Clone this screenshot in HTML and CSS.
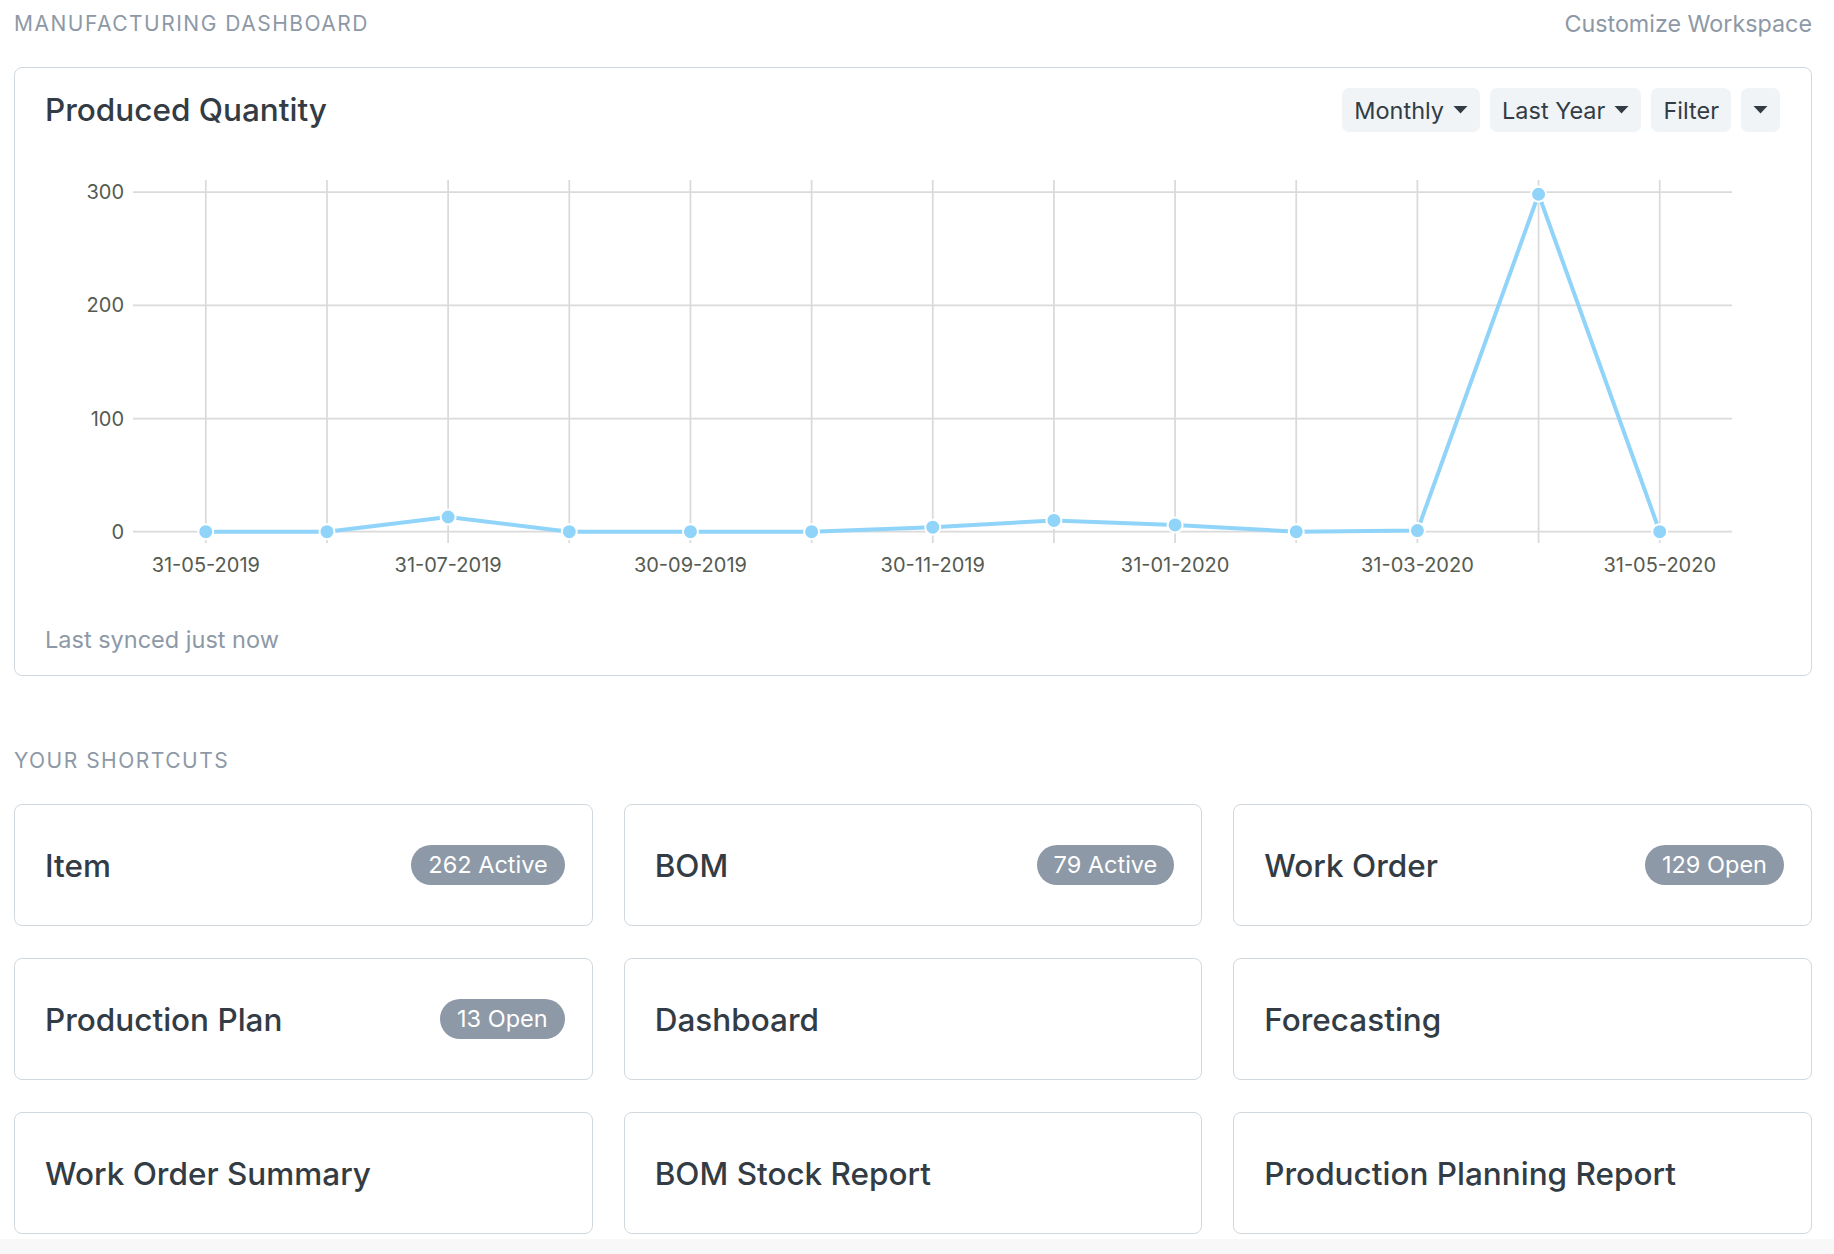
FILE: index.html
```html
<!DOCTYPE html>
<html lang="en">
<head>
<meta charset="utf-8">
<title>Manufacturing Dashboard</title>
<link rel="stylesheet" href="styles.css">
</head>
<body>
<div class="page">
  <header class="page-head">
    <div class="group-title">Manufacturing Dashboard</div>
    <a class="customize">Customize Workspace</a>
  </header>

  <section class="chart-card">
    <div class="chart-head">
      <h2 class="chart-title">Produced Quantity</h2>
      <div class="chart-actions">
        <button class="btn">Monthly<svg class="caret" viewBox="0 0 14 8" width="14" height="8"><path d="M0 0 L14 0 L7 7.5 Z"/></svg></button>
        <button class="btn">Last Year<svg class="caret" viewBox="0 0 14 8" width="14" height="8"><path d="M0 0 L14 0 L7 7.5 Z"/></svg></button>
        <button class="btn">Filter</button>
        <button class="btn btn-icon"><svg class="caret solo" viewBox="0 0 14 8" width="14" height="8"><path d="M0 0 L14 0 L7 7.5 Z"/></svg></button>
      </div>
    </div>

    <svg class="chart" width="1735" height="440" viewBox="0 0 1735 440">
      <g class="grid">
        <line x1="160.80" y1="30" x2="160.80" y2="393"/>
        <line x1="281.96" y1="30" x2="281.96" y2="393"/>
        <line x1="403.12" y1="30" x2="403.12" y2="393"/>
        <line x1="524.28" y1="30" x2="524.28" y2="393"/>
        <line x1="645.44" y1="30" x2="645.44" y2="393"/>
        <line x1="766.60" y1="30" x2="766.60" y2="393"/>
        <line x1="887.76" y1="30" x2="887.76" y2="393"/>
        <line x1="1008.92" y1="30" x2="1008.92" y2="393"/>
        <line x1="1130.08" y1="30" x2="1130.08" y2="393"/>
        <line x1="1251.24" y1="30" x2="1251.24" y2="393"/>
        <line x1="1372.40" y1="30" x2="1372.40" y2="393"/>
        <line x1="1493.56" y1="30" x2="1493.56" y2="393"/>
        <line x1="1614.72" y1="30" x2="1614.72" y2="393"/>
        <line x1="88" y1="42" x2="1687" y2="42"/>
        <line x1="88" y1="155.3" x2="1687" y2="155.3"/>
        <line x1="88" y1="268.7" x2="1687" y2="268.7"/>
        <line x1="88" y1="381.7" x2="1687" y2="381.7"/>
      </g>
      <g class="y-labels">
        <text x="79" y="49">300</text>
        <text x="79" y="162.3">200</text>
        <text x="79" y="275.7">100</text>
        <text x="79" y="388.7">0</text>
      </g>
      <g class="x-labels">
        <text x="160.80" y="422">31-05-2019</text>
        <text x="403.12" y="422">31-07-2019</text>
        <text x="645.44" y="422">30-09-2019</text>
        <text x="887.76" y="422">30-11-2019</text>
        <text x="1130.08" y="422">31-01-2020</text>
        <text x="1372.40" y="422">31-03-2020</text>
        <text x="1614.72" y="422">31-05-2020</text>
      </g>
      <polyline class="series" points="160.80,381.7 281.96,381.7 403.12,366.98 524.28,381.7 645.44,381.7 766.60,381.7 887.76,377.17 1008.92,370.38 1130.08,374.91 1251.24,381.7 1372.40,380.57 1493.56,44.27 1614.72,381.7"/>
      <g class="dots">
        <circle cx="160.80" cy="381.7" r="7.5"/>
        <circle cx="281.96" cy="381.7" r="7.5"/>
        <circle cx="403.12" cy="366.98" r="7.5"/>
        <circle cx="524.28" cy="381.7" r="7.5"/>
        <circle cx="645.44" cy="381.7" r="7.5"/>
        <circle cx="766.60" cy="381.7" r="7.5"/>
        <circle cx="887.76" cy="377.17" r="7.5"/>
        <circle cx="1008.92" cy="370.38" r="7.5"/>
        <circle cx="1130.08" cy="374.91" r="7.5"/>
        <circle cx="1251.24" cy="381.7" r="7.5"/>
        <circle cx="1372.40" cy="380.57" r="7.5"/>
        <circle cx="1493.56" cy="44.27" r="7.5"/>
        <circle cx="1614.72" cy="381.7" r="7.5"/>
      </g>
    </svg>

    <div class="synced">Last synced just now</div>
  </section>

  <div class="group-title section-title">Your Shortcuts</div>

  <div class="shortcuts">
    <a class="shortcut"><span class="sc-label">Item</span><span class="badge">262 Active</span></a>
    <a class="shortcut"><span class="sc-label">BOM</span><span class="badge">79 Active</span></a>
    <a class="shortcut"><span class="sc-label">Work Order</span><span class="badge">129 Open</span></a>
    <a class="shortcut"><span class="sc-label">Production Plan</span><span class="badge">13 Open</span></a>
    <a class="shortcut"><span class="sc-label">Dashboard</span></a>
    <a class="shortcut"><span class="sc-label">Forecasting</span></a>
    <a class="shortcut"><span class="sc-label">Work Order Summary</span></a>
    <a class="shortcut"><span class="sc-label">BOM Stock Report</span></a>
    <a class="shortcut"><span class="sc-label">Production Planning Report</span></a>
  </div>
</div>
</body>
</html>
```

FILE: styles.css
```css
* {
  box-sizing: border-box;
}

html {
  background: #f8f8f8;
}

body {
  margin: 0;
  font-family: Inter, "Noto Sans", "Liberation Sans", sans-serif;
  color: #333c44;
}

.page {
  background: #ffffff;
  padding: 0 22px 5px 14px;
}

.page-head {
  height: 48px;
  display: flex;
  align-items: center;
  justify-content: space-between;
}

.group-title {
  font-size: 21px;
  font-weight: 400;
  letter-spacing: 1.5px;
  text-transform: uppercase;
  color: #8d99a6;
  line-height: 30px;
}

.customize {
  font-size: 23.3px;
  color: #8d99a6;
  line-height: 30px;
}

.chart-card {
  margin-top: 19px;
  border: 1px solid #d1d8dd;
  border-radius: 8px;
  padding: 20px 31px 19px 30px;
}

.chart-head {
  height: 44px;
  display: flex;
  align-items: center;
  justify-content: space-between;
}

.chart-title {
  margin: 0;
  font-size: 31.5px;
  font-weight: 500;
  color: #333c44;
  line-height: 44px;
}

.chart-actions {
  display: flex;
  gap: 10px;
  height: 44px;
}

.btn {
  display: flex;
  align-items: center;
  height: 44px;
  padding: 0 12px;
  border: 0;
  border-radius: 7px;
  background: #f0f4f7;
  font-family: inherit;
  font-size: 23.5px;
  color: #333c44;
}

.caret {
  margin-left: 9px;
  width: 15px;
  height: 8px;
  fill: #333c44;
}

.caret.solo {
  margin-left: 0;
}

.chart {
  display: block;
  margin-top: 18px;
}

.grid line {
  stroke: #dadada;
  stroke-width: 1.75;
}

.y-labels text,
.x-labels text {
  font-family: Inter, "Noto Sans", sans-serif;
  font-size: 20px;
  fill: #555b51;
}

.y-labels text {
  text-anchor: end;
}

.x-labels text {
  text-anchor: middle;
}

.series {
  fill: none;
  stroke: #90d4f9;
  stroke-width: 4;
  stroke-linejoin: round;
}

.dots circle {
  fill: #90d4f9;
  stroke: #ffffff;
  stroke-width: 2;
}

.synced {
  margin-top: 34px;
  font-size: 23.5px;
  line-height: 32px;
  color: #8d99a6;
}

.section-title {
  margin-top: 70px;
  margin-bottom: 28px;
}

.shortcuts {
  display: grid;
  grid-template-columns: repeat(3, 1fr);
  column-gap: 31px;
  row-gap: 32px;
}

.shortcut {
  height: 122px;
  display: flex;
  align-items: center;
  justify-content: space-between;
  padding: 0 27px 0 30px;
  border: 1px solid #d1d8dd;
  border-radius: 8px;
  background: #ffffff;
}

.sc-label {
  font-size: 31.5px;
  font-weight: 500;
  color: #333c44;
}

.badge {
  height: 40px;
  line-height: 40px;
  padding: 0 17px;
  border-radius: 20px;
  background: #8d99a6;
  color: #ffffff;
  font-size: 23.5px;
}
```
